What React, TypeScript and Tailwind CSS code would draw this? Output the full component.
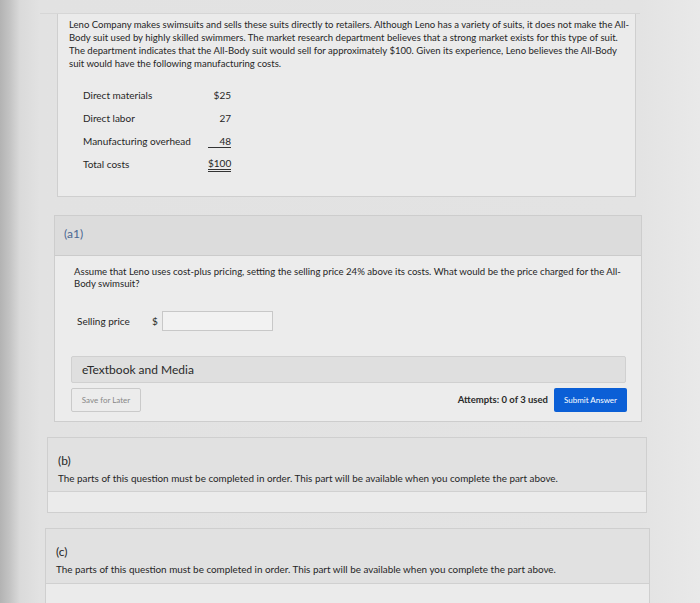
import React from "react";

export default function App() {
  return (
    <div className="w-[700px] h-[603px] overflow-hidden bg-[linear-gradient(to_right,#b3b3b3_0px,#c4c4c4_10px,#dadada_20px,#e2e2e2_40px,#e3e3e3_640px,#e9e9e9_700px)] font-['Lato','Liberation_Sans',sans-serif] text-[#262626] flex flex-col">
      <div className="h-[14px] shrink-0 border-b border-[#d6d6d6] ml-[40px] mr-[60px]" />
      {/* Card 1 */}
      <div className="ml-[57px] w-[579px] h-[183px] shrink-0 border border-t-0 border-[#cfcfcf] bg-[#ebebeb] pl-[11px] pt-[4px]">
        <div className="text-[9.55px] leading-[13px] whitespace-nowrap">
          <div>Leno Company makes swimsuits and sells these suits directly to retailers. Although Leno has a variety of suits, it does not make the All-</div>
          <div>Body suit used by highly skilled swimmers. The market research department believes that a strong market exists for this type of suit.</div>
          <div>The department indicates that the All-Body suit would sell for approximately $100. Given its experience, Leno believes the All-Body</div>
          <div>suit would have the following manufacturing costs.</div>
        </div>
        <div className="mt-[14px] pl-[14px] text-[10px]">
          <div className="flex h-[23px] items-center">
            <div className="w-[125px]">Direct materials</div>
            <div className="w-[23px] text-right">$25</div>
          </div>
          <div className="flex h-[23px] items-center">
            <div className="w-[125px]">Direct labor</div>
            <div className="w-[23px] text-right">27</div>
          </div>
          <div className="flex h-[23px] items-center">
            <div className="w-[125px]">Manufacturing overhead</div>
            <div className="w-[23px] text-right border-b border-[#333] leading-[12px]">48</div>
          </div>
          <div className="flex h-[23px] items-center">
            <div className="w-[125px]">Total costs</div>
            <div className="w-[23px] text-right border-b-[3px] border-double border-[#333] leading-[12px]">$100</div>
          </div>
        </div>
      </div>

      {/* Card a1 */}
      <div className="mt-[18px] ml-[54px] w-[588px] shrink-0 border border-[#cdcdcd] bg-[#ececec]">
        <div className="h-[40px] bg-[#dcdcdc] border-b border-[#cbcbcb] flex items-center pl-[9px] pb-[3px] text-[12px] text-[#4a6792]">
          (a1)
        </div>
        <div className="pl-[19px] pr-[16px] pt-[10px] pb-[9px]">
          <div className="text-[9.6px] leading-[12px] whitespace-nowrap">
            <div>Assume that Leno uses cost-plus pricing, setting the selling price 24% above its costs. What would be the price charged for the All-</div>
            <div>Body swimsuit?</div>
          </div>
          <div className="mt-[21px] flex items-center h-[20px] text-[10px]">
            <span className="ml-[3px] w-[75px]">Selling price</span>
            <span className="w-[10px]">$</span>
            <div className="w-[111px] h-[20px] border border-[#c8c8c8] bg-[#f2f2f2]" />
          </div>
          <div className="mt-[25px] -ml-[3px] w-[555px] h-[27px] bg-[#dfdfdf] border border-[#d0d0d0] rounded-[2px] flex items-center pl-[10px] text-[12px] text-[#2a2a2a]">
            eTextbook and Media
          </div>
          <div className="mt-[5px] -ml-[3px] w-[556px] flex items-center h-[24px]">
            <div className="w-[70px] h-[24px] border border-[#cacaca] bg-[#ececec] rounded-[2px] flex items-center justify-center text-[8px] text-[#888]">
              Save for Later
            </div>
            <div className="flex-1" />
            <div className="text-[9.5px] font-bold text-[#2a2a2a] mr-[6px]">Attempts: 0 of 3 used</div>
            <div className="w-[73px] h-[24px] bg-[#0b5fd6] rounded-[2px] flex items-center justify-center text-[8px] text-white">
              Submit Answer
            </div>
          </div>
        </div>
      </div>

      {/* Card b */}
      <div className="mt-[15px] ml-[47px] w-[600px] shrink-0 border border-[#cfcfcf] bg-[#e9e9e9]">
        <div className="h-[54px] bg-[#e1e1e1] border-b border-[#d0d0d0] pl-[10px] pt-[15px]">
          <div className="text-[12px] leading-[16px]">(b)</div>
          <div className="mt-[3px] text-[9.9px] leading-[12px] whitespace-nowrap">
            The parts of this question must be completed in order. This part will be available when you complete the part above.
          </div>
        </div>
        <div className="h-[20px] bg-[#ebebeb]" />
      </div>

      {/* Card c */}
      <div className="mt-[15px] ml-[45px] w-[605px] shrink-0 border border-[#cfcfcf] bg-[#e9e9e9]">
        <div className="h-[55px] bg-[#e1e1e1] border-b border-[#d0d0d0] pl-[10px] pt-[15px]">
          <div className="text-[12px] leading-[16px]">(c)</div>
          <div className="mt-[3px] text-[9.9px] leading-[12px] whitespace-nowrap">
            The parts of this question must be completed in order. This part will be available when you complete the part above.
          </div>
        </div>
        <div className="h-[30px] bg-[#ebebeb]" />
      </div>
    </div>
  );
}
